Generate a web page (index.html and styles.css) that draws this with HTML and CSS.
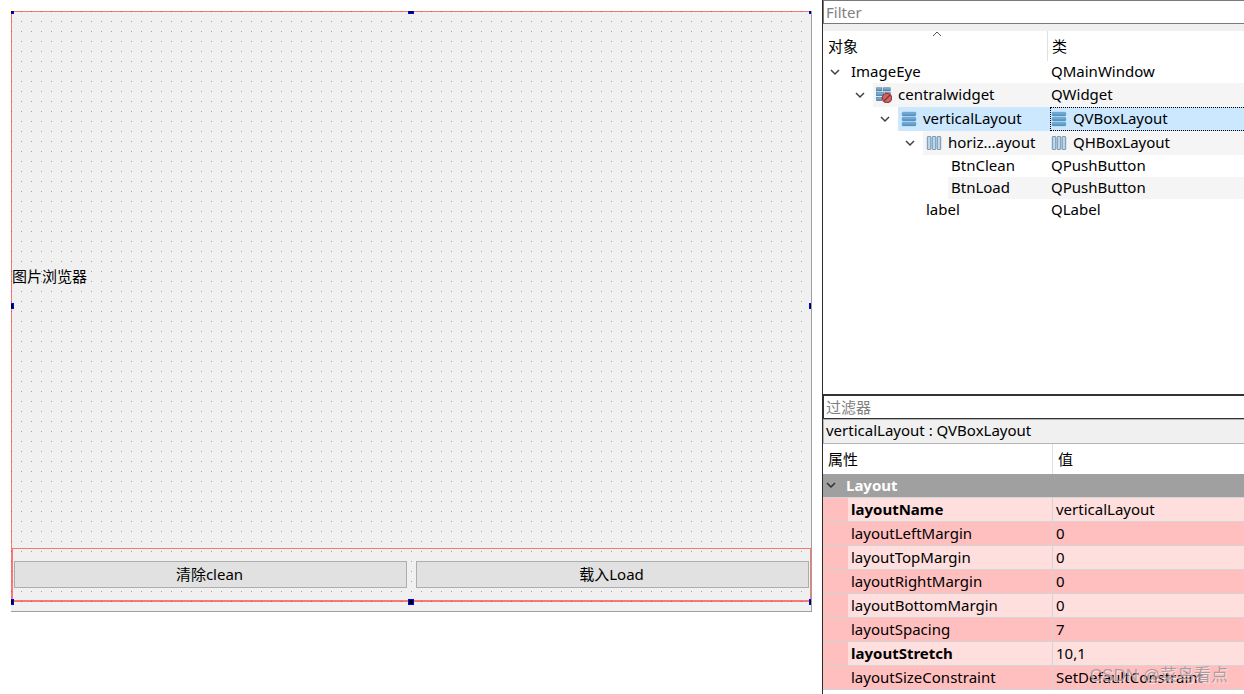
FILE: index.html
```html
<!DOCTYPE html>
<html lang="zh-CN">
<head>
<meta charset="utf-8">
<title>ImageEye</title>
<link rel="stylesheet" href="styles.css">
</head>
<body>
<svg class="defs" width="0" height="0" aria-hidden="true">
  <defs>
    <linearGradient id="barV" x1="0" y1="0" x2="0" y2="1"><stop offset="0" stop-color="#86c0ea"/><stop offset="1" stop-color="#3f87bd"/></linearGradient>
    <linearGradient id="barH" x1="0" y1="0" x2="1" y2="0"><stop offset="0" stop-color="#8fb6d4"/><stop offset=".5" stop-color="#c4e4fa"/><stop offset="1" stop-color="#94b8d4"/></linearGradient>
    <symbol id="vbox" viewBox="0 0 16 16">
      <g fill="url(#barV)" stroke="#4f83ab" stroke-width=".6"><rect x="1.3" y="1.3" width="13.4" height="3.4" rx=".6"/><rect x="1.3" y="6.3" width="13.4" height="3.4" rx=".6"/><rect x="1.3" y="11.3" width="13.4" height="3.4" rx=".6"/></g>
    </symbol>
    <symbol id="hbox" viewBox="0 0 16 16">
      <g fill="url(#barH)" stroke="#7790a8" stroke-width=".9"><rect x="1.3" y="1.5" width="3.6" height="13" rx=".6"/><rect x="6.2" y="1.5" width="3.6" height="13" rx=".6"/><rect x="11.1" y="1.5" width="3.6" height="13" rx=".6"/></g>
    </symbol>
    <symbol id="nolayout" viewBox="0 0 16 16">
      <g fill="url(#barV)" stroke="#56728b" stroke-width=".6"><rect x=".5" y=".8" width="5.4" height="3.2"/><rect x="7.2" y=".8" width="7" height="3.2"/><rect x=".5" y="5.6" width="7.4" height="3.2"/><rect x="9.2" y="5.6" width="5" height="3.2"/><rect x=".5" y="10.4" width="5.4" height="3.2"/></g>
      <circle cx="11" cy="11" r="4.6" fill="#c9696a" stroke="#a83338" stroke-width="1.3"/>
      <path d="M8 14 14 8" stroke="#8f3035" stroke-width="1.5"/>
    </symbol>
    <symbol id="chev" viewBox="0 0 10 10"><path d="M1 3 5 7 9 3" fill="none" stroke="currentColor" stroke-width="1.5"/></symbol>
  </defs>
</svg>
<div class="designer">
  <main class="workspace">
    <div class="form">
      <div class="vlayout">
        <div class="preview">图片浏览器</div>
        <div class="hlayout">
          <button class="push" type="button">清除clean</button>
          <button class="push" type="button">载入Load</button>
        </div>
        <i class="handle n w"></i><i class="handle n c"></i><i class="handle n e"></i>
        <i class="handle m w"></i><i class="handle m e"></i>
        <i class="handle s w"></i><i class="handle s c"></i><i class="handle s e"></i>
      </div>
    </div>
  </main>

  <aside class="side">
    <section class="objects">
      <input class="filter" type="text" placeholder="Filter" aria-label="Filter">
      <table class="tree">
        <colgroup><col class="col-object"><col></colgroup>
        <thead>
          <tr><th>对象<svg class="sort" viewBox="0 0 10 6"><path d="M1 5 5 1 9 5" fill="none" stroke="#555"/></svg></th><th>类</th></tr>
        </thead>
        <tbody>
          <tr><td><div class="node l0"><button class="toggle" type="button" aria-label="ImageEye"><svg><use href="#chev"/></svg></button><span class="item">ImageEye</span></div></td><td><span class="item">QMainWindow</span></td></tr>
          <tr class="tall alt"><td><div class="node l1"><button class="toggle" type="button" aria-label="centralwidget"><svg><use href="#chev"/></svg></button><span class="item"><svg class="icon"><use href="#nolayout"/></svg>centralwidget</span></div></td><td><span class="item">QWidget</span></td></tr>
          <tr class="tall selected"><td><div class="node l2"><button class="toggle" type="button" aria-label="verticalLayout"><svg><use href="#chev"/></svg></button><span class="item"><svg class="icon"><use href="#vbox"/></svg>verticalLayout</span></div></td><td class="current"><span class="item"><svg class="icon"><use href="#vbox"/></svg>QVBoxLayout</span></td></tr>
          <tr class="tall alt"><td><div class="node l3"><button class="toggle" type="button" aria-label="horizontalLayout"><svg><use href="#chev"/></svg></button><span class="item"><svg class="icon"><use href="#hbox"/></svg>horiz...ayout</span></div></td><td><span class="item"><svg class="icon"><use href="#hbox"/></svg>QHBoxLayout</span></td></tr>
          <tr><td><div class="node l5"><span class="item">BtnClean</span></div></td><td><span class="item">QPushButton</span></td></tr>
          <tr class="alt"><td><div class="node l5"><span class="item">BtnLoad</span></div></td><td><span class="item">QPushButton</span></td></tr>
          <tr><td><div class="node l4"><span class="item">label</span></div></td><td><span class="item">QLabel</span></td></tr>
        </tbody>
      </table>
    </section>

    <section class="properties">
      <input class="filter dark" type="text" placeholder="过滤器" aria-label="过滤器">
      <div class="caption">verticalLayout : QVBoxLayout</div>
      <table class="props">
        <colgroup><col class="col-name"><col></colgroup>
        <thead><tr><th>属性</th><th>值</th></tr></thead>
        <tbody>
          <tr class="group"><td colspan="2"><button class="toggle" type="button"><svg><use href="#chev"/></svg>Layout</button></td></tr>
          <tr class="changed"><td>layoutName</td><td>verticalLayout</td></tr>
          <tr><td>layoutLeftMargin</td><td>0</td></tr>
          <tr><td>layoutTopMargin</td><td>0</td></tr>
          <tr><td>layoutRightMargin</td><td>0</td></tr>
          <tr><td>layoutBottomMargin</td><td>0</td></tr>
          <tr><td>layoutSpacing</td><td>7</td></tr>
          <tr class="changed"><td>layoutStretch</td><td>10,1</td></tr>
          <tr><td>layoutSizeConstraint</td><td>SetDefaultConstraint</td></tr>
        </tbody>
      </table>
      <div class="watermark">CSDN @菜鸟看点</div>
    </section>
  </aside>
</div>
</body>
</html>
```
FILE: styles.css
```css
* { box-sizing: border-box; }
body {
  margin: 0;
  background: #fff;
  color: #000;
  font: 15px/20px "Noto Sans", "Noto Sans CJK SC", sans-serif;
}
button, input { font: inherit; color: inherit; }
.defs { position: absolute; }
.designer {
  display: grid;
  grid-template-columns: minmax(0, 1fr) 422px;
  min-height: 100vh;
}

/* form canvas */
.workspace { padding: 11px 10px 0 11px; }
.form {
  padding-bottom: 9px;
  border-right: 1px solid #a0a0a0;
  border-bottom: 1px solid #a0a0a0;
  overflow: hidden;
  background-image:
    linear-gradient(90deg, transparent 1px, #f0f0f0 1px),
    linear-gradient(#a0a0a0 1px, #f0f0f0 1px);
  background-size: 10px 10px;
}
.vlayout {
  position: relative;
  display: flex;
  flex-direction: column;
  gap: 7px;
  min-height: 591px;
  border: 1px solid rgba(255, 0, 0, .5);
  border-right: 0;
}
.preview { flex: 1; display: flex; align-items: center; padding-bottom: 2px; }
.hlayout {
  display: flex;
  gap: 9px;
  padding: 12px 1px;
  border: 1px solid rgba(255, 0, 0, .5);
}
.push {
  flex: 1;
  height: 27px;
  padding: 0 2px 2px 0;
  border: 1px solid #adadad;
  background: #e1e1e1;
}
.handle {
  position: absolute;
  width: 6px;
  height: 6px;
  background: #000;
  border: 1px solid #00f;
}
.handle.n { top: -4px; }
.handle.m { top: calc(50% - 4px); }
.handle.s { bottom: -4px; }
.handle.w { left: -4px; }
.handle.c { left: calc(50% - 4px); }
.handle.e { right: -4px; }

/* side panels */
.side {
  display: flex;
  flex-direction: column;
  border-left: 1px solid #2b2b2b;
}
.objects { flex: 1; }
.filter {
  display: block;
  width: 100%;
  height: 24px;
  padding: 0 2px;
  border: 1px solid #7a7a7a;
  border-right: 0;
  background: #fff;
  outline: 0;
}
.filter::placeholder { color: #808080; opacity: 1; }
.filter.dark { height: 25px; border-color: #333; border-top-width: 2px; }
table { width: 100%; table-layout: fixed; border-collapse: separate; border-spacing: 0; }
th, td { padding: 0; text-align: left; white-space: nowrap; }
th { height: 30px; padding-left: 5px; font-weight: 400; }
th + th { border-left: 1px solid #e0e0e0; }
.toggle {
  display: flex;
  align-items: center;
  justify-content: center;
  width: 25px;
  padding: 0 2px 0 0;
  border: 0;
  background: none;
  color: #404040;
}
.toggle svg { width: 10px; height: 10px; }

.tree { border-top: 7px solid #f0f0f0; }
.tree th { position: relative; }
.col-object { width: 224px; }
.tree th + th { padding-left: 4px; }
.sort { position: absolute; left: 109px; top: 0; width: 10px; height: 6px; }
.node { display: flex; }
.node .item { flex: 1; }
.item { display: flex; align-items: center; height: 22px; padding: 0 0 2px 3px; }
.tall .item { height: 24px; }
.icon { flex: none; width: 16px; height: 16px; margin: 2px 6px 0 0; }
td > .item { padding-left: 4px; }
.alt .node .item, .alt td + td { background: #f5f5f5; }
.selected .node .item, .selected td + td { background: #cce8ff; }
.current .item { margin-left: 3px; padding-left: 0; border: 1px dotted #000; border-right: 0; }
.l1 { padding-left: 25px; }
.l2 { padding-left: 50px; }
.l3 { padding-left: 75px; }
.l4 { padding-left: 100px; }
.l5 { padding-left: 125px; }

.properties { position: relative; padding-bottom: 4px; }
.caption {
  height: 25px;
  padding-left: 2px;
  border: 1px solid #b4b4b4;
  border-right: 0;
  background: #f0f0f0;
}
.col-name { width: 229px; }
.props th + th { padding-left: 5px; }
.props td {
  height: 24px;
  padding: 0 0 2px 28px;
  border-bottom: 1px solid #d4d4d4;
  background: #ffbfbf;
}
.props td + td { padding-left: 3px; border-left: 1px solid #d4d4d4; }
.props tr:nth-child(even) td { background: #ffdede; }
.props tr:nth-child(even) td:first-child { background: linear-gradient(90deg, #ffbfbf 25px, #ffdede 25px); }
.props .group td { padding: 0 0 2px; background: #a0a0a0; }
.group .toggle { width: auto; padding-left: 3px; gap: 10px; color: #fff; font-weight: 700; }
.group svg { color: #303030; }
.changed td:first-child { font-weight: 700; }
.watermark {
  position: absolute;
  right: 16px;
  bottom: 4px;
  color: rgba(150, 145, 150, .8);
  font: 17px/28px "Liberation Sans", "Noto Sans CJK SC", sans-serif;
  text-shadow: 1px 1px 0 rgba(255, 255, 255, .5);
}
```
